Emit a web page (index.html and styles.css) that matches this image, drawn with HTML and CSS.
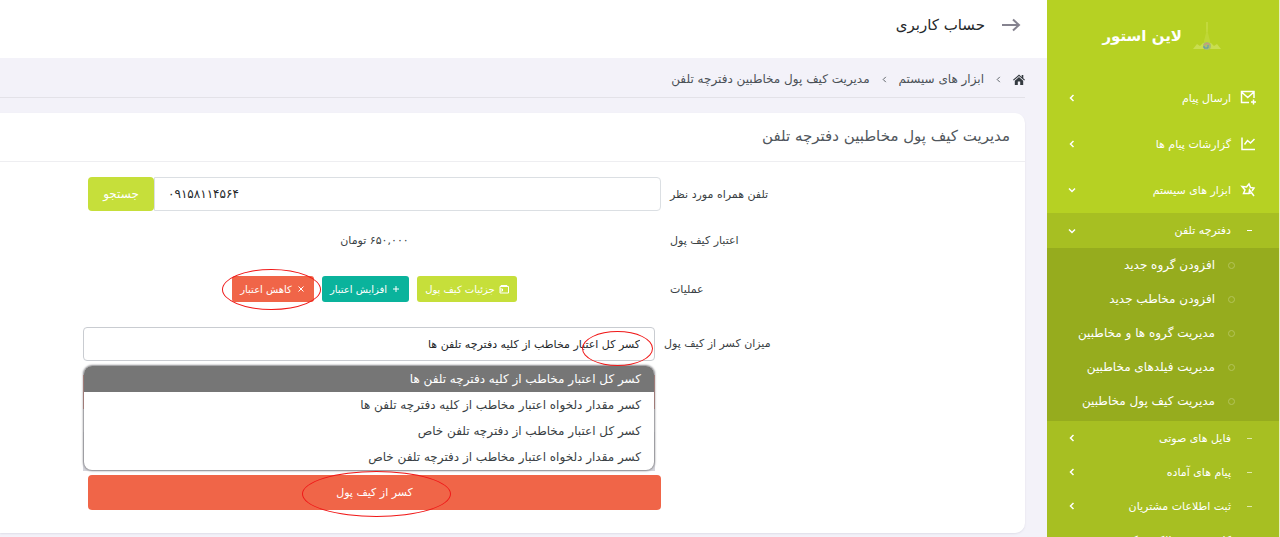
FILE: index.html
```html
<!DOCTYPE html>
<html lang="fa" dir="rtl">
<head>
<meta charset="utf-8">
<meta name="viewport" content="width=device-width, initial-scale=1">
<title>مدیریت کیف پول مخاطبین دفترچه تلفن</title>
<link rel="stylesheet" href="styles.css">
</head>
<body>
<div class="app">
  <nav class="sidebar" aria-label="منوی اصلی">
    <a class="brand" href="#">
      <svg class="brand-logo" viewBox="0 0 30 34" aria-hidden="true">
        <path d="M15 3v10" fill="none" stroke="#c3d93c" stroke-width="2"/>
        <path d="M15 10l4 16h-8z" fill="#bfd736"/>
        <path d="M1 30l4-5 3 2 3-3h8l3 3 3-2 4 5z" fill="#c9de50"/>
        <circle cx="15" cy="27" r="4" fill="#a9c06c"/>
        <path d="M12 26l3-2 3 2" fill="none" stroke="#d58a8a" stroke-width="1"/>
        <path d="M12 27v2h4v-3" fill="none" stroke="#5a94b8" stroke-width="1"/>
      </svg>
      <span class="brand-name">لاین استور</span>
    </a>
    <ul class="menu">
      <li><a class="menu-link" href="#">
        <svg class="menu-icon" viewBox="0 0 16 16" aria-hidden="true"><path d="M9 12.500H1.500v-11h12.500V8M1.500 2l6.250 5.500L14 2M13.500 9.500v5M11 12h5"/></svg>
        <span>ارسال پیام</span>
        <svg class="chevron" viewBox="0 0 8 8" aria-hidden="true"><path d="M5.500 1l-3 3 3 3"/></svg>
      </a></li>
      <li><a class="menu-link" href="#">
        <svg class="menu-icon" viewBox="0 0 16 16" aria-hidden="true"><path d="M2 1.500v12h13M4.500 8.500l3-4 3 2.500 4-4"/></svg>
        <span>گزارشات پیام ها</span>
        <svg class="chevron" viewBox="0 0 8 8" aria-hidden="true"><path d="M5.500 1l-3 3 3 3"/></svg>
      </a></li>
      <li><a class="menu-link" href="#">
        <svg class="menu-icon" viewBox="0 0 16 16" aria-hidden="true"><path d="M9 11.500H3.500L5 8 2 4.500l4.500.5L9 2l1.500 3.500 3.500.5-2 3M9 11.500L9.500 8l4.500 6M9 11.500l3-1"/></svg>
        <span>ابزار های سیستم</span>
        <svg class="chevron" viewBox="0 0 8 8" aria-hidden="true"><path d="M1 2.500l3 3 3-3"/></svg>
      </a>
      <ul class="submenu">
        <li><a class="sub-link active" href="#"><span class="dash"></span><span>دفترچه تلفن</span>
          <svg class="chevron" viewBox="0 0 8 8" aria-hidden="true"><path d="M1 2.500l3 3 3-3"/></svg></a>
          <ul class="leaf-menu">
            <li><a class="leaf-link" href="#">افزودن گروه جدید</a></li>
            <li><a class="leaf-link" href="#">افزودن مخاطب جدید</a></li>
            <li><a class="leaf-link" href="#">مدیریت گروه ها و مخاطبین</a></li>
            <li><a class="leaf-link" href="#">مدیریت فیلدهای مخاطبین</a></li>
            <li><a class="leaf-link" href="#">مدیریت کیف پول مخاطبین</a></li>
          </ul>
        </li>
        <li><a class="sub-link" href="#"><span class="dash"></span><span>فایل های صوتی</span>
          <svg class="chevron" viewBox="0 0 8 8" aria-hidden="true"><path d="M5.500 1l-3 3 3 3"/></svg></a></li>
        <li><a class="sub-link" href="#"><span class="dash"></span><span>پیام های آماده</span>
          <svg class="chevron" viewBox="0 0 8 8" aria-hidden="true"><path d="M5.500 1l-3 3 3 3"/></svg></a></li>
        <li><a class="sub-link" href="#"><span class="dash"></span><span>ثبت اطلاعات مشتریان</span>
          <svg class="chevron" viewBox="0 0 8 8" aria-hidden="true"><path d="M5.500 1l-3 3 3 3"/></svg></a></li>
        <li><a class="sub-link" href="#"><span class="dash"></span><span>کارت ویزیت الکترونیک</span></a></li>
      </ul></li>
    </ul>
  </nav>

  <div class="main">
    <header class="topbar">
      <svg class="arrow" viewBox="0 0 20 14" aria-hidden="true"><path d="M1 7h17M12 1.500L18 7l-6 5.500"/></svg>
      <span>حساب کاربری</span>
    </header>
    <nav class="breadcrumb" aria-label="مسیر">
      <a href="#" aria-label="خانه"><svg class="home" viewBox="0 0 12 11" aria-hidden="true"><path d="M6 .5L0 5.800l.8.8L6 2l5.200 4.600.8-.8-1.700-1.500V1H8.700v1.900zM6 3L1.800 6.700V11h3V7.500h2.400V11h3V6.700z"/></svg></a>
      <svg class="crumb-sep" viewBox="0 0 8 8" aria-hidden="true"><path d="M5.500 1l-3 3 3 3"/></svg>
      <a href="#">ابزار های سیستم</a>
      <svg class="crumb-sep" viewBox="0 0 8 8" aria-hidden="true"><path d="M5.500 1l-3 3 3 3"/></svg>
      <span>مدیریت کیف پول مخاطبین دفترچه تلفن</span>
    </nav>
    <main class="card">
      <h1 class="card-title">مدیریت کیف پول مخاطبین دفترچه تلفن</h1>
      <form class="form">
        <div class="row row-phone">
          <label class="label" for="phone">تلفن همراه مورد نظر</label>
          <div class="search">
            <input class="phone" id="phone" type="text" dir="ltr" value="۰۹۱۵۸۱۱۴۵۶۴">
            <button class="search-btn" type="button">جستجو</button>
          </div>
        </div>
        <div class="row row-credit">
          <span class="label">اعتبار کیف پول</span>
          <span class="center">۶۵۰,۰۰۰ تومان</span>
        </div>
        <div class="row row-actions">
          <span class="label">عملیات</span>
          <div class="actions">
            <button class="btn lime" type="button"><svg class="btn-icon" viewBox="0 0 10 10" aria-hidden="true"><path d="M2 2.500V1.500h6v1M1 2.500h8.500v6.500H1zM1 5h2.500v2H1"/></svg>جزئیات کیف پول</button>
            <button class="btn teal" type="button"><svg class="btn-icon" viewBox="0 0 10 10" aria-hidden="true"><path d="M5 2v6M2 5h6"/></svg>افزایش اعتبار</button>
            <span class="marked">
              <button class="btn coral" type="button"><svg class="btn-icon" viewBox="0 0 10 10" aria-hidden="true"><path d="M2.500 2.500l5 5M7.500 2.500l-5 5"/></svg>کاهش اعتبار</button>
              <span class="ring ring-decrease"></span>
            </span>
          </div>
        </div>
        <div class="row row-amount">
          <label class="label" for="amount">میزان کسر از کیف پول</label>
          <div class="picker">
            <select class="select" id="amount">
              <option>کسر کل اعتبار مخاطب از کلیه دفترچه تلفن ها</option>
            </select>
            <span class="ring ring-select"></span>
            <div class="underlay"></div>
            <ul class="options" role="listbox" aria-label="میزان کسر">
              <li class="option selected" role="option" aria-selected="true">کسر کل اعتبار مخاطب از کلیه دفترچه تلفن ها</li>
              <li class="option" role="option">کسر مقدار دلخواه اعتبار مخاطب از کلیه دفترچه تلفن ها</li>
              <li class="option" role="option">کسر کل اعتبار مخاطب از دفترچه تلفن خاص</li>
              <li class="option" role="option">کسر مقدار دلخواه اعتبار مخاطب از دفترچه تلفن خاص</li>
            </ul>
          </div>
        </div>
        <div class="row">
          <span></span>
          <button class="submit" type="submit"><span class="marked">کسر از کیف پول<span class="ring ring-submit"></span></span></button>
        </div>
      </form>
    </main>
  </div>
</div>
</body>
</html>
```
FILE: styles.css
```css
* { box-sizing: border-box; }
body {
  margin: 0;
  background: #f3f2f9;
  color: #3a3f44;
  font-family: "DejaVu Sans", sans-serif;
  font-size: 11px;
}
ul { list-style: none; margin: 0; padding: 0; }
a { color: inherit; text-decoration: none; }
button, input, select { font: inherit; }
svg { flex: none; fill: none; stroke: currentColor; }

.app { display: flex; height: 100vh; overflow: hidden; }
.sidebar { flex: 0 0 233px; background: #b6d123; color: #fff; border-right: 1px solid #e9f0c0; overflow: hidden; }
.brand { display: flex; align-items: center; gap: 10px; height: 75px; padding: 0 57px 4px 0; }
.brand-logo { width: 30px; height: 34px; stroke: none; }
.brand-name { font-size: 15px; font-weight: bold; }
.menu-link { display: flex; align-items: center; gap: 9px; height: 46px; padding: 0 23px 0 21px; }
.menu-icon { width: 16px; height: 16px; stroke-width: 1.5; }
.chevron { width: 8px; height: 8px; stroke-width: 1.5; margin-right: auto; }
.submenu { background: #a7bf22; }
.sub-link { display: flex; align-items: center; gap: 16px; height: 34px; padding: 0 27px 0 21px; }
.sub-link.active { height: 35px; }
.dash { width: 5px; height: 1px; background: #dfe9a8; }
.active .dash { background: #fff; }
.leaf-menu { background: #96ac1e; padding-bottom: 3px; }
.leaf-link { display: flex; align-items: center; gap: 13px; height: 34px; padding-right: 44px; font-size: 12px; }
.leaf-link::before { content: ""; width: 5px; height: 5px; border: 1px solid #b4c45a; border-radius: 50%; }

.main { flex: 1; min-width: 0; }
.topbar { display: flex; align-items: center; gap: 16px; height: 58px; padding: 0 26px 8px; background: #fff; color: #25282b; font-size: 15px; }
.arrow { width: 20px; height: 14px; color: #85838f; stroke-width: 2; }
.breadcrumb { display: flex; align-items: center; gap: 11px; height: 40px; margin-right: 22px; padding-top: 3px; border-bottom: 1px solid #e3e2e8; color: #4b5157; font-size: 12px; }
.home { display: block; width: 12px; height: 11px; fill: #343a40; stroke: none; }
.crumb-sep { width: 7px; height: 7px; }
.card { margin: 15px 22px 0 0; padding-bottom: 23px; background: #fff; border-radius: 0 10px 10px 0; box-shadow: 0 1px 2px #dfdee8; }
.card-title { display: flex; align-items: center; height: 49px; margin: 0; padding: 0 15px 3px 0; border-bottom: 1px solid #eeeef1; color: #50565c; font-size: 15px; font-weight: normal; }
.form { padding-top: 15px; }
.row { display: grid; grid-template-columns: 355fr 573fr 79fr; column-gap: 9px; align-items: center; }
.label { text-align: left; }
.row-phone { height: 34px; }
.row-credit { height: 58px; }
.row-actions { height: 40px; }
.row-amount { grid-template-columns: 361fr 572fr 74fr; align-items: start; margin-top: 18px; }
.row-amount .label { line-height: 34px; }
.search { display: flex; height: 34px; }
.phone { flex: 1; min-width: 0; padding: 0 13px; border: 1px solid #dbdfe3; border-radius: 0 4px 4px 0; background: #fff; color: #25282b; font-size: 12px; }
.search-btn { width: 66px; border: 0; border-radius: 4px; background: #c6df3a; color: #fff; font-size: 12px; }
.center { text-align: center; }
.actions { display: flex; justify-content: center; gap: 8px; }
.marked { position: relative; display: inline-flex; }
.btn { display: flex; align-items: center; gap: 4px; height: 26px; padding: 0 8px; border: 0; border-radius: 3px; color: #fff; font-size: 10px; white-space: nowrap; }
.btn-icon { width: 10px; height: 10px; }
.lime { background: #c6df3a; }
.teal { background: #0ab39c; }
.coral, .submit { background: #f06548; }
.ring { position: absolute; border: 1px solid #f01818; border-radius: 50%; pointer-events: none; }
.ring-decrease { inset: -7px -7px -8px -10px; }
.ring-select { top: 4px; right: 2px; width: 71px; height: 35px; z-index: 2; }
.ring-submit { inset: -15px -38px -18px -34px; }
.picker { position: relative; }
.select { display: block; width: 100%; height: 34px; padding: 0 14px; border: 1px solid #c9ccd1; border-radius: 4px; appearance: none; background: #fff; color: #25282b; }
.underlay { height: 96px; margin-top: 14px; margin-bottom: 4px; background: linear-gradient(#d9503c 34px, #efeff3 34px, #efeff3 57px, #d5d5dc 57px); }
.options { position: absolute; top: 39px; left: 1px; right: 1px; overflow: hidden; border-radius: 8px; background: #fff; box-shadow: 0 0 2px 1px #8b8b8f; font-size: 12px; }
.option { height: 26px; padding: 0 13px; line-height: 26px; }
.selected { background: #767676; color: #fff; }
.submit { display: flex; align-items: center; justify-content: center; height: 35px; border: 0; border-radius: 4px; color: #fff; }
```
